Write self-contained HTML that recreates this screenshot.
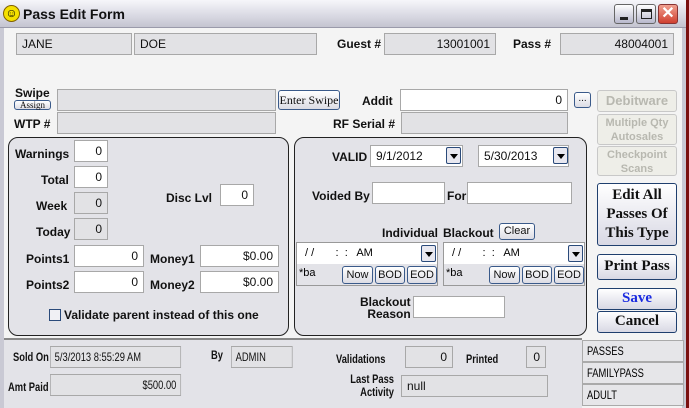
<!DOCTYPE html><html><head><style>
*{box-sizing:border-box;margin:0;padding:0}
body{width:689px;height:408px;overflow:hidden;background:#7a1010;font-family:"Liberation Sans",Arial,sans-serif;position:relative}
.a{position:absolute}
#win{left:0;top:0;width:686px;height:408px;background:#f4f4f4;border-left:4px solid #c9c9d4;border-right:4px solid #c9c9d4}
#title{left:0;top:0;width:686px;height:28px;background:linear-gradient(#f6f6fa,#d8d8e2 60%,#c4c4d0);border-bottom:1px solid #9a9aaa}
.f{position:absolute;height:22px;background:#e2e2e5;border:1px solid #a8a8a8;font-size:12px;line-height:20px;padding:0 5px;color:#111}
.w{background:#fff}
.r{text-align:right}
.l{position:absolute;font-size:12px;font-weight:bold;color:#111;white-space:nowrap}
.n{transform:scaleX(.78);transform-origin:left top}
.nr{transform:scaleX(.78);transform-origin:right top}
.p{position:absolute;background:#e3e3e8;border:1.5px solid #222;border-radius:10px}
.b{position:absolute;border:1px solid #3a5a8a;border-radius:3px;background:linear-gradient(#fff,#dcdce4);font-size:11px;text-align:center;color:#111}
.sb{position:absolute;border:1.5px solid #1f3f6e;border-radius:3px;background:linear-gradient(#fff,#d8d8e4);font-family:"Liberation Serif",serif;font-weight:bold;font-size:15px;text-align:center;color:#111;line-height:19px}
.g{position:absolute;border:1px solid #c8c8c8;border-radius:3px;background:#eeeee8;color:#b8b8b0;font-weight:bold;font-size:11px;text-align:center;line-height:14px}
.dd{position:absolute;width:15px;height:17px;border:1px solid #2a4a7a;border-radius:2px;background:#e8e8f0}
.dd:after{content:"";position:absolute;left:3px;top:6px;border-left:4px solid transparent;border-right:4px solid transparent;border-top:5px solid #000}
.li{position:absolute;left:582px;width:102px;height:22px;border:1px solid #aaa;background:#e6e6e9;font-size:12px;line-height:20px;padding-left:4px}
</style></head><body>
<div id="win" class="a"></div>
<div id="title" class="a"></div>
<div class="a" style="left:3px;top:5px;width:17px;height:17px;border-radius:50%;background:#f5e000;border:1px solid #806000;font-size:12px;line-height:15px;text-align:center;font-weight:bold">☺</div>
<div class="a" style="left:23px;top:6px;font-size:14px;font-weight:bold;color:#111">Pass Edit Form</div>
<div class="a" style="left:614px;top:4px;width:20px;height:20px;border:1px solid #666;border-radius:3px;background:linear-gradient(#fff,#b8b8cc)"><div class="a" style="left:5px;top:12px;width:8px;height:3px;background:#222"></div></div>
<div class="a" style="left:636px;top:4px;width:20px;height:20px;border:1px solid #666;border-radius:3px;background:linear-gradient(#fff,#b8b8cc)"><div class="a" style="left:4px;top:4px;width:11px;height:10px;border:1px solid #222;border-top:3px solid #222"></div></div>
<div class="a" style="left:658px;top:4px;width:20px;height:20px;border:1px solid #833;border-radius:3px;background:linear-gradient(#f0a090,#d04030);color:#fff;font-size:16px;line-height:18px;text-align:center;font-weight:bold">✕</div>

<div class="f" style="left:16px;top:33px;width:116px">JANE</div>
<div class="f" style="left:134px;top:33px;width:183px">DOE</div>
<div class="l" style="left:337px;top:37px">Guest #</div>
<div class="f r" style="left:384px;top:33px;width:112px">13001001</div>
<div class="l" style="left:513px;top:37px">Pass #</div>
<div class="f r" style="left:560px;top:33px;width:114px">48004001</div>

<div class="l" style="left:15px;top:86px">Swipe</div>
<div class="b" style="left:14px;top:100px;width:37px;height:10px;font-size:9px;line-height:8px;font-family:'Liberation Serif',serif">Assign</div>
<div class="f" style="left:57px;top:89px;width:219px"></div>
<div class="b" style="left:278px;top:90px;width:62px;height:20px;font-family:'Liberation Serif',serif;font-size:12px;line-height:18px">Enter Swipe</div>
<div class="l" style="left:14px;top:117px">WTP #</div>
<div class="f" style="left:57px;top:112px;width:219px"></div>
<div class="l" style="left:362px;top:94px">Addit</div>
<div class="f w r" style="left:400px;top:89px;width:168px">0</div>
<div class="b" style="left:574px;top:92px;width:17px;height:16px;font-size:10px;line-height:12px">...</div>
<div class="l" style="left:333px;top:117px">RF Serial #</div>
<div class="f" style="left:401px;top:112px;width:167px"></div>
<div class="g" style="left:597px;top:90px;width:80px;height:22px;font-size:13px;line-height:20px">Debitware</div>
<div class="g" style="left:597px;top:114px;width:80px;height:31px;padding-top:1px">Multiple Qty<br>Autosales</div>
<div class="g" style="left:597px;top:146px;width:80px;height:30px;padding-top:1px">Checkpoint<br>Scans</div>

<div class="p" style="left:8px;top:137px;width:281px;height:199px"></div>
<div class="l" style="left:15px;top:147px">Warnings</div><div class="f w r" style="left:74px;top:140px;width:34px">0</div>
<div class="l" style="left:41px;top:173px">Total</div><div class="f w r" style="left:74px;top:166px;width:34px">0</div>
<div class="l" style="left:36px;top:199px">Week</div><div class="f r" style="left:74px;top:192px;width:34px">0</div>
<div class="l" style="left:36px;top:225px">Today</div><div class="f r" style="left:74px;top:218px;width:34px">0</div>
<div class="l" style="left:166px;top:191px">Disc Lvl</div><div class="f w r" style="left:220px;top:184px;width:34px">0</div>
<div class="l" style="left:26px;top:252px">Points1</div><div class="f w r" style="left:74px;top:245px;width:70px">0</div>
<div class="l" style="left:150px;top:252px">Money1</div><div class="f w r" style="left:200px;top:245px;width:79px">$0.00</div>
<div class="l" style="left:26px;top:278px">Points2</div><div class="f w r" style="left:74px;top:271px;width:70px">0</div>
<div class="l" style="left:150px;top:278px">Money2</div><div class="f w r" style="left:200px;top:271px;width:79px">$0.00</div>
<div class="a" style="left:49px;top:309px;width:12px;height:12px;border:1px solid #2a4a7a;background:#f0f0f4"></div>
<div class="l" style="left:64px;top:308px">Validate parent instead of this one</div>

<div class="p" style="left:294px;top:137px;width:293px;height:199px"></div>
<div class="l" style="left:332px;top:150px">VALID</div>
<div class="f w" style="left:370px;top:145px;width:93px">9/1/2012</div><div class="dd" style="left:446px;top:147px"></div>
<div class="f w" style="left:478px;top:145px;width:91px">5/30/2013</div><div class="dd" style="left:553px;top:147px"></div>
<div class="l" style="left:312px;top:189px">Voided By</div><div class="f w" style="left:372px;top:182px;width:73px"></div>
<div class="l" style="left:447px;top:189px">For</div><div class="f w" style="left:467px;top:182px;width:105px"></div>
<div class="l" style="left:382px;top:226px">Individual</div>
<div class="l" style="left:443px;top:226px">Blackout</div>
<div class="b" style="left:499px;top:223px;width:36px;height:17px;line-height:15px">Clear</div>

<div class="a" style="left:296px;top:242px;width:142px;height:44px;border:1px solid #999;background:#e3e3e8"><div class="a" style="left:0;top:0;width:140px;height:21px;background:#fff;font-size:11px;line-height:20px;padding-left:8px;white-space:pre">/ /       :  :   AM</div><div class="dd" style="left:124px;top:2px"></div><div class="a" style="left:2px;top:24px;font-size:11px">*ba</div>
<div class="b" style="left:45px;top:23px;width:31px;height:18px;line-height:16px">Now</div><div class="b" style="left:78px;top:23px;width:30px;height:18px;line-height:16px">BOD</div><div class="b" style="left:110px;top:23px;width:30px;height:18px;line-height:16px">EOD</div></div>
<div class="a" style="left:443px;top:242px;width:142px;height:44px;border:1px solid #999;background:#e3e3e8"><div class="a" style="left:0;top:0;width:140px;height:21px;background:#fff;font-size:11px;line-height:20px;padding-left:8px;white-space:pre">/ /       :  :   AM</div><div class="dd" style="left:124px;top:2px"></div><div class="a" style="left:2px;top:24px;font-size:11px">*ba</div>
<div class="b" style="left:45px;top:23px;width:31px;height:18px;line-height:16px">Now</div><div class="b" style="left:78px;top:23px;width:30px;height:18px;line-height:16px">BOD</div><div class="b" style="left:110px;top:23px;width:30px;height:18px;line-height:16px">EOD</div></div>
<div class="l" style="left:360px;top:296px;text-align:right;line-height:12px">Blackout<br>&nbsp;&nbsp;Reason</div>
<div class="f w" style="left:413px;top:296px;width:92px"></div>

<div class="sb" style="left:597px;top:183px;width:80px;height:63px;line-height:19px;padding-top:2px">Edit All<br>Passes Of<br>This Type</div>
<div class="sb" style="left:597px;top:254px;width:80px;height:26px;line-height:23px">Print Pass</div>
<div class="sb" style="left:597px;top:288px;width:80px;height:22px;color:#1a2ae0">Save</div>
<div class="sb" style="left:597px;top:311px;width:80px;height:22px">Cancel</div>

<div class="a" style="left:4px;top:338px;width:578px;height:70px;border-top:2px solid #888;background:#e3e3e8"></div>
<div class="l n" style="left:13px;top:350px">Sold On</div><div class="f n" style="left:50px;top:346px;width:168px">5/3/2013 8:55:29 AM</div>
<div class="l n" style="left:211px;top:348px">By</div><div class="f n" style="left:231px;top:346px;width:79px">ADMIN</div>
<div class="l n" style="left:336px;top:352px">Validations</div><div class="f r" style="left:405px;top:346px;width:48px">0</div>
<div class="l n" style="left:466px;top:352px">Printed</div><div class="f r" style="left:526px;top:346px;width:20px">0</div>
<div class="l n" style="left:8px;top:380px">Amt Paid</div><div class="f r n" style="left:50px;top:374px;width:168px">$500.00</div>
<div class="l nr" style="left:334px;top:373px;width:60px;text-align:right;line-height:13px">Last Pass<br>Activity</div>
<div class="f" style="left:401px;top:375px;width:147px">null</div>
<div class="li" style="top:340px"><span class="a n" style="left:4px">PASSES</span></div>
<div class="li" style="top:362px"><span class="a n" style="left:4px">FAMILYPASS</span></div>
<div class="li" style="top:384px"><span class="a n" style="left:4px">ADULT</span></div>
</body></html>
